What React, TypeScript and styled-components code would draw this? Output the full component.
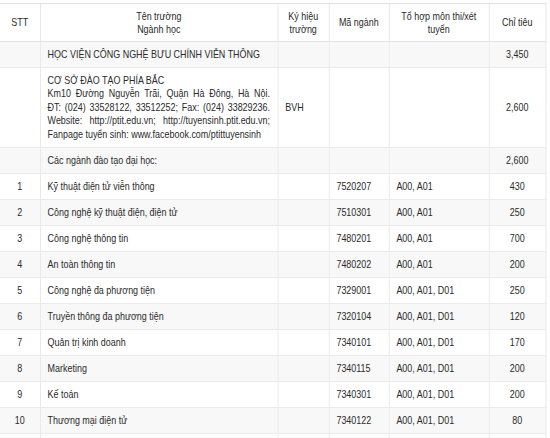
import React from "react";
import styled, { createGlobalStyle } from "styled-components";

const Global = createGlobalStyle`
  html, body { margin: 0; padding: 0; background: #ffffff; }
  body { font-family: "Liberation Sans", Arial, sans-serif; }
`;

const Page = styled.div`
  width: 550px;
  height: 438px;
  overflow: hidden;
  padding-top: 3px;
  box-sizing: border-box;
  background: #fff;
`;

/* The source table is rendered in a narrow (condensed) face; emulate it by
   compressing the whole table horizontally. */
const Squeeze = styled.div`
  width: 682px;
  transform: scaleX(0.8);
  transform-origin: left top;
`;

const Table = styled.table`
  width: 682px;
  table-layout: fixed;
  border-collapse: collapse;
  font-family: "Liberation Sans", Arial, sans-serif;
  font-size: 11.2px;
  line-height: 13.5px;
  color: #2a2a2a;
`;

const HeadRow = styled.tr`
  height: 38px;
  background: #fff;
`;

const Row = styled.tr<{ $shade: boolean; $h?: number }>`
  height: ${(p) => p.$h ?? 26}px;
  background: ${(p) => (p.$shade ? "#f8f8f8" : "#ffffff")};
`;

const HeadCell = styled.th`
  font-weight: normal;
  text-align: center;
  vertical-align: middle;
  padding: 0 3px;
  line-height: 13px;
  white-space: nowrap;
  border-top: 1px solid #e2e2e2;
  border-right: 1px solid #e2e2e2;
  border-bottom: 1px solid #e2e2e2;
`;

const Cell = styled.td<{ $align?: "left" | "center" | "right" }>`
  text-align: ${(p) => p.$align ?? "left"};
  vertical-align: middle;
  padding: 0 9px;
  border-right: 1px solid #e4e4e4;
  border-bottom: 1px solid #ebebeb;
  white-space: nowrap;
  overflow: hidden;
`;

const Line = styled.span`
  display: block;
`;

const JLine = styled.span<{ $full?: boolean }>`
  display: block;
  white-space: nowrap;
  text-align: ${(p) => (p.$full ? "justify" : "left")};
  text-align-last: ${(p) => (p.$full ? "justify" : "left")};
`;

type Item = { stt: string; name: string; code: string; combo: string; quota: string };

const items: Item[] = [
  { stt: "1", name: "Kỹ thuật điện tử viễn thông", code: "7520207", combo: "A00, A01", quota: "430" },
  { stt: "2", name: "Công nghệ kỹ thuật điện, điện tử", code: "7510301", combo: "A00, A01", quota: "250" },
  { stt: "3", name: "Công nghệ thông tin", code: "7480201", combo: "A00, A01", quota: "700" },
  { stt: "4", name: "An toàn thông tin", code: "7480202", combo: "A00, A01", quota: "200" },
  { stt: "5", name: "Công nghệ đa phương tiện", code: "7329001", combo: "A00, A01, D01", quota: "250" },
  { stt: "6", name: "Truyền thông đa phương tiện", code: "7320104", combo: "A00, A01, D01", quota: "120" },
  { stt: "7", name: "Quản trị kinh doanh", code: "7340101", combo: "A00, A01, D01", quota: "170" },
  { stt: "8", name: "Marketing", code: "7340115", combo: "A00, A01, D01", quota: "200" },
  { stt: "9", name: "Kế toán", code: "7340301", combo: "A00, A01, D01", quota: "200" },
  { stt: "10", name: "Thương mại điện tử", code: "7340122", combo: "A00, A01, D01", quota: "80" },
  { stt: "", name: "", code: "", combo: "", quota: "" },
];

export default function App() {
  return (
    <Page>
      <Global />
      <Squeeze>
        <Table>
          <colgroup>
            <col style={{ width: 50 }} />
            <col style={{ width: 297 }} />
            <col style={{ width: 64 }} />
            <col style={{ width: 75 }} />
            <col style={{ width: 125 }} />
            <col style={{ width: 71 }} />
          </colgroup>
          <thead>
            <HeadRow>
              <HeadCell>STT</HeadCell>
              <HeadCell>
                <Line>Tên trường</Line>
                <Line>Ngành học</Line>
              </HeadCell>
              <HeadCell>
                <Line>Ký hiệu</Line>
                <Line>trường</Line>
              </HeadCell>
              <HeadCell>Mã ngành</HeadCell>
              <HeadCell>
                <Line>Tổ hợp môn thi/xét</Line>
                <Line>tuyển</Line>
              </HeadCell>
              <HeadCell>Chỉ tiêu</HeadCell>
            </HeadRow>
          </thead>
          <tbody>
            <Row $shade>
              <Cell />
              <Cell>HỌC VIỆN CÔNG NGHỆ BƯU CHÍNH VIỄN THÔNG</Cell>
              <Cell />
              <Cell />
              <Cell />
              <Cell $align="center">3,450</Cell>
            </Row>
            <Row $shade={false} $h={80}>
              <Cell />
              <Cell>
                <JLine>CƠ SỞ ĐÀO TẠO PHÍA BẮC</JLine>
                <JLine $full>Km10 Đường Nguyễn Trãi, Quận Hà Đông, Hà Nội.</JLine>
                <JLine $full>ĐT: (024) 33528122, 33512252; Fax: (024) 33829236.</JLine>
                <JLine $full>Website: http://ptit.edu.vn; http://tuyensinh.ptit.edu.vn;</JLine>
                <JLine>Fanpage tuyển sinh: www.facebook.com/ptittuyensinh</JLine>
              </Cell>
              <Cell>BVH</Cell>
              <Cell />
              <Cell />
              <Cell $align="center">2,600</Cell>
            </Row>
            <Row $shade>
              <Cell />
              <Cell>Các ngành đào tạo đại học:</Cell>
              <Cell />
              <Cell />
              <Cell />
              <Cell $align="center">2,600</Cell>
            </Row>
            {items.map((it, i) => (
              <Row key={i} $shade={i % 2 === 1}>
                <Cell $align="center">{it.stt}</Cell>
                <Cell>{it.name}</Cell>
                <Cell />
                <Cell>{it.code}</Cell>
                <Cell>{it.combo}</Cell>
                <Cell $align="center">{it.quota}</Cell>
              </Row>
            ))}
          </tbody>
        </Table>
      </Squeeze>
    </Page>
  );
}
